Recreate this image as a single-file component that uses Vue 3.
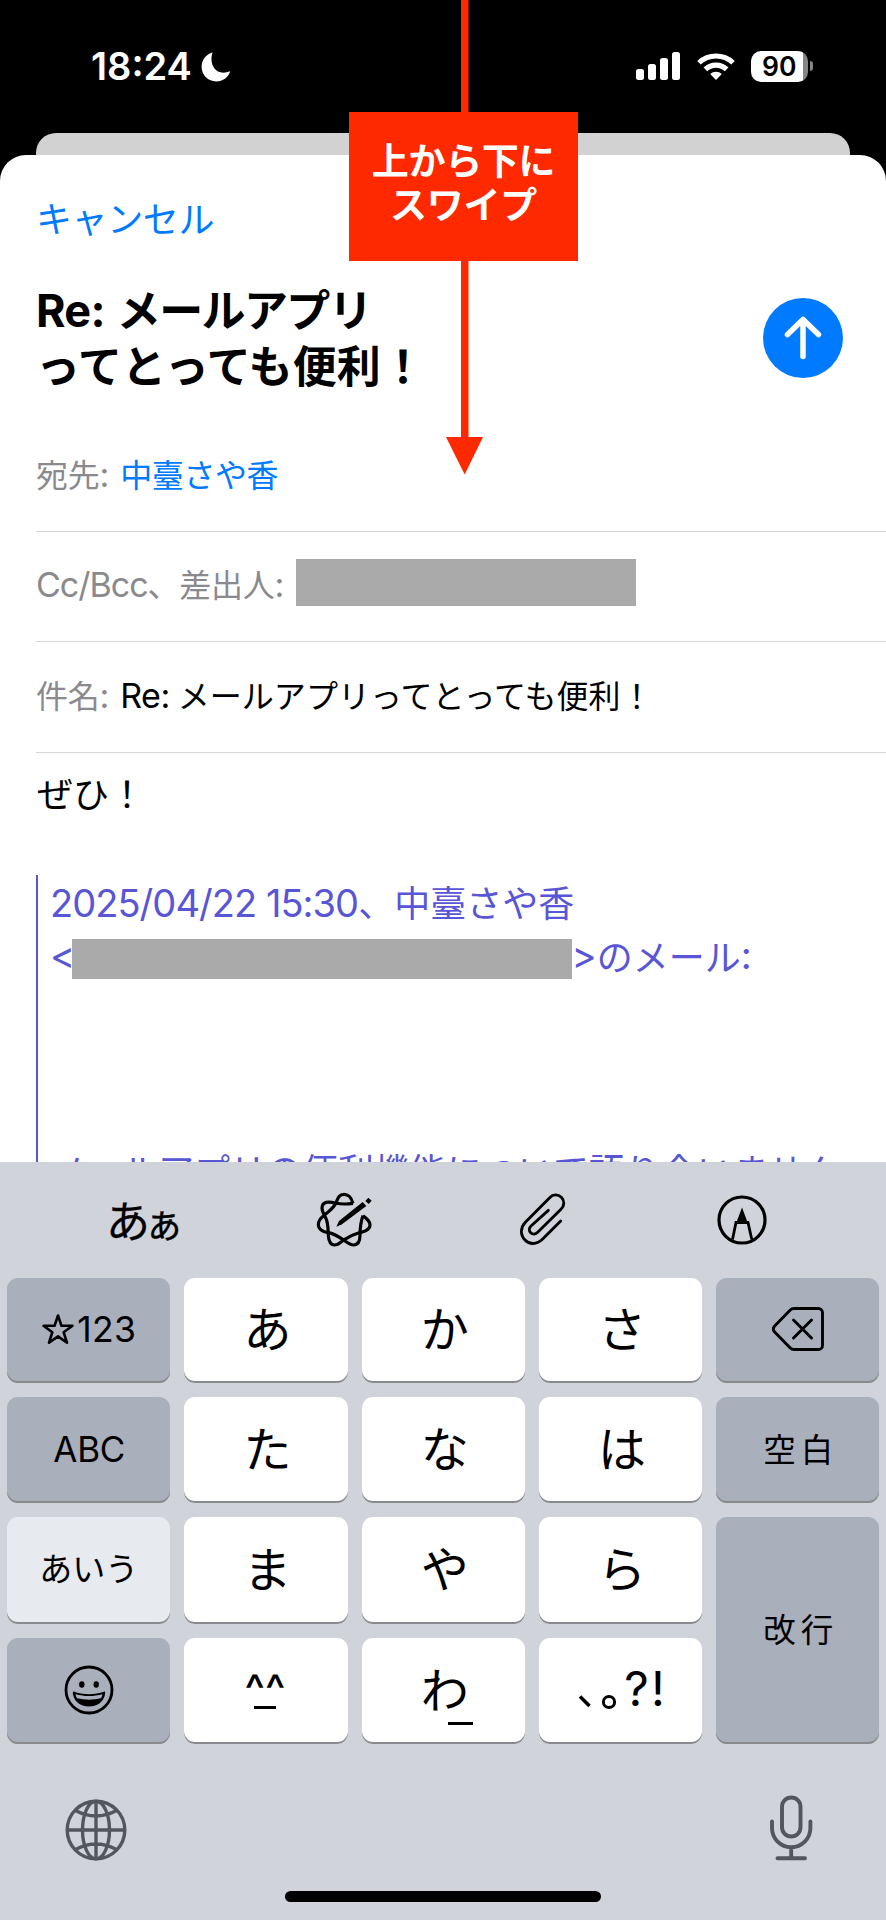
<script setup>
const keys = [
  { id: 'num', type: 'dark', label: '123', star: true, cls: 'latin num' },
  { id: 'a', label: 'あ' },
  { id: 'ka', label: 'か' },
  { id: 'sa', label: 'さ' },
  { id: 'del', type: 'dark', icon: 'delete' },
  { id: 'abc', type: 'dark', label: 'ABC', cls: 'latin abc' },
  { id: 'ta', label: 'た' },
  { id: 'na', label: 'な' },
  { id: 'ha', label: 'は' },
  { id: 'space', type: 'dark', label: '空白', cls: 'word' },
  { id: 'aiu', type: 'light', label: 'あいう', cls: 'aiu' },
  { id: 'ma', label: 'ま' },
  { id: 'ya', label: 'や' },
  { id: 'ra', label: 'ら' },
  { id: 'enter', type: 'dark tall', label: '改行', cls: 'word' },
  { id: 'emoji', type: 'dark', icon: 'emoji' },
  { id: 'face', icon: 'face' },
  { id: 'wa', label: 'わ', under: true },
  { id: 'punct', icon: 'punct' },
]
</script>

<template>
  <div class="phone">
    <header class="status">
      <div class="clock">
        <span class="time">18:24</span>
        <svg class="moon" viewBox="0 0 30 30"><path d="M11.600 .600C8.400 8.800 12.200 20.200 21 20.600c3 .200 5.400-.300 8.200-1.400C27.300 25.400 21.800 29.400 15.400 29.400 7 29.400.600 23 .600 14.800.600 8.200 5 2.300 11.600.600z" fill="#fff" /></svg>
      </div>
      <div class="indicators">
        <div class="bars"><i class="b1" /><i class="b2" /><i class="b3" /><i class="b4" /></div>
        <svg class="wifi" viewBox="0 0 38 28">
          <g fill="#fff">
            <path d="M19 28l-5.800-5.900a8.600 8.600 0 0 1 11.600 0z" />
            <path d="M6.600 15.500a18 18 0 0 1 24.800 0l-3.600 3.700a12.800 12.800 0 0 0-17.600 0z" />
            <path d="M.200 9a27 27 0 0 1 37.600 0l-3.500 3.600a22 22 0 0 0-30.600 0z" />
          </g>
        </svg>
        <div class="battery"><span>90</span></div>
        <div class="nub" />
      </div>
    </header>
    <div class="backcard" />

    <main class="sheet">
      <div class="nav"><a class="cancel">キャンセル</a></div>
      <div class="titlebar">
        <h1><span class="first"><span class="re">Re:</span>メールアプリ</span><br>ってとっても便利！</h1>
        <button class="send">
          <svg viewBox="0 0 80 80"><path d="M40 58.500V22M24.500 36.500L40 21.500l15.500 15" fill="none" stroke="#fff" stroke-width="5.500" stroke-linecap="round" stroke-linejoin="round" /></svg>
        </button>
      </div>
      <section class="row"><span class="lab">宛先<b>:</b></span><span class="to">中臺さや香</span></section>
      <section class="row"><span class="lab"><b class="cc">Cc/Bcc</b>、差出人<b>:</b></span><i class="mask m1" /></section>
      <section class="row"><span class="lab">件名<b>:</b></span><span class="subj"><b>Re:</b>メールアプリってとっても便利！</span></section>
      <div class="body">
        <p class="msg">ぜひ！</p>
        <blockquote>
          <p><b class="date">2025/04/22 15:30</b>、中臺さや香</p>
          <p class="addr"><b class="lt">&lt;</b><i class="mask m2" /><b>&gt;</b>のメール<b>:</b></p>
          <p class="later">メールアプリの便利機能について語り合いません</p>
        </blockquote>
      </div>
    </main>

    <footer class="keyboard">
      <div class="tools">
        <div class="tool"><span class="aa">あ<small>ぁ</small></span></div>
        <div class="tool">
          <svg class="write" viewBox="677 68 168 165">
            <g fill="none" stroke="#000" stroke-width="9.500" stroke-linejoin="round">
              <path d="M788 102C782 82 775 75 761 75C743 75 742 92 734 106C724 122 710 130 699 140C689 148 684 155 684 166C684 182 698 187 714 190C732 193 745 202 760 212C770 219 778 227 790 227C807 227 809 212 809 198C809 180 811 158 818 139" />
              <path d="M788 102C768 105 752 105 735 101C715 96 695 96 695 116C695 128 703 138 708 150C714 166 713 182 714 198C715 214 718 227 733 227C746 227 752 217 762 211C776 202 788 196 802 192C822 187 839 182 839 167C839 155 830 148 818 139" />
            </g>
            <path d="M738 172L746 155L817 98L828 110L755 165z" />
            <path d="M834 85l10 9-9 10-10-9z" />
          </svg>
        </div>
        <div class="tool">
          <svg class="clip" viewBox="56 73 141 158" fill="none" stroke="#000" stroke-width="8.500" stroke-linecap="round" stroke-linejoin="round">
            <path d="M181 157L127 211C109 229 87 228 74 214C59 199 60 177 75 161L148 87C158 76 173 76 183 86C193 96 193 111 182 122L112 191C106 197 97 198 91 192C85 186 86 178 92 172L144 125" />
          </svg>
        </div>
        <div class="tool">
          <svg class="pen" viewBox="0 0 50 50">
            <circle cx="25" cy="25" r="23" fill="none" stroke="#000" stroke-width="3.200" />
            <path d="M25 12.500l6 16h-12z" />
            <path d="M15.500 44.500L19 27.500h12l3.800 17" fill="none" stroke="#000" stroke-width="2.800" />
          </svg>
        </div>
      </div>

      <div class="keys">
        <div v-for="k in keys" :key="k.id" class="key" :class="k.type">
          <svg v-if="k.star" class="star" viewBox="0 0 32 30"><path d="M16 1.500l3.500 10.300h11l-8.800 6.500 3.300 10.400L16 22.400l-9 6.300 3.300-10.400L1.500 11.800h11z" fill="none" stroke="#000" stroke-width="2.600" stroke-linejoin="round" /></svg>
          <span v-if="k.label" :class="k.cls || 'kana'">{{ k.label }}</span>
          <i v-if="k.under" class="under" />
          <svg v-if="k.icon === 'delete'" class="del" viewBox="0 0 52 44" fill="none" stroke="#000" stroke-width="2.900" stroke-linecap="round" stroke-linejoin="round">
            <path d="M22 1.500h24.500a4 4 0 0 1 4 4v33a4 4 0 0 1-4 4H22q-2.200 0-3.700-1.500L2.400 24.700q-2.200-2.700 0-5.400L18.300 3q1.500-1.500 3.700-1.500z" />
            <path d="M21.500 13l18 18M39.500 13l-18 18" />
          </svg>
          <svg v-if="k.icon === 'emoji'" class="emoji" viewBox="0 0 50 50">
            <circle cx="25" cy="25" r="23" fill="none" stroke="#000" stroke-width="2.800" />
            <ellipse cx="17.800" cy="19.500" rx="2.700" ry="3.300" /><ellipse cx="32.200" cy="19.500" rx="2.700" ry="3.300" />
            <path fill-rule="evenodd" d="M9.500 26.500c10 3.600 21 3.600 31 0 1 0 .700 1.500.500 3-1.700 8-8.200 12-16 12s-14.300-4-16-12c-.200-1.500-.500-3 .500-3zM11.500 29.200c.400 1.600.800 2.800 1.500 4 8 1.900 16 1.900 24 0 .700-1.200 1.100-2.400 1.500-4-9 2.400-18 2.400-27 0z" />
          </svg>
          <div v-if="k.icon === 'face'" class="face"><span>^^</span><i /></div>
          <div v-if="k.icon === 'punct'" class="punct"><svg viewBox="0 0 46 18"><path d="M2 3.500l9.500 9.500" stroke="#000" stroke-width="3.600" fill="none" /><circle cx="31" cy="9" r="5.600" stroke="#000" stroke-width="3" fill="none" /></svg><span>?!</span></div>
        </div>
      </div>

      <div class="bottom">
        <svg class="globe" viewBox="0 0 62 62" fill="none" stroke="#53565f" stroke-width="3.400">
          <circle cx="31" cy="31" r="28.800" />
          <ellipse cx="31" cy="31" rx="13.500" ry="28.800" />
          <path d="M31 2v58M2 31h58M10.500 11.500q20.500 11 41 0M10.500 50.500q20.500-11 41 0" />
        </svg>
        <svg class="mic" viewBox="0 0 44 66" fill="none" stroke="#53565f" stroke-width="3.900" stroke-linecap="round">
          <rect x="13" y="2.500" width="18.500" height="39" rx="9.250" />
          <path d="M3 26.500v6.500a19.200 19.200 0 0 0 38.400 0v-6.500M22.200 52.500v10.500M8.500 63.200h27.500" />
        </svg>
      </div>
      <div class="home" />
    </footer>

    <div class="swipe">
      <svg viewBox="0 0 230 475"><path d="M112 0h7.500v437h14.500l-18.300 37.500L97 437h15z" fill="#ff2900" /></svg>
      <div class="callout">上から下に<br>スワイプ</div>
    </div>
  </div>
</template>

<style>
body { margin: 0; }
</style>

<style scoped>
* { box-sizing: border-box; }
.phone {
  position: relative; width: 886px; height: 1920px; overflow: hidden; background: #000;
  font-family: "Noto Sans CJK JP", sans-serif; color: #000;
  display: flex; flex-direction: column;
}
b, .time, .battery, .latin, .re { font-family: Inter, sans-serif; }
b { font-weight: 400; }
p, h1, blockquote { margin: 0; }
svg { display: block; }
.status { height: 133px; flex: none; display: flex; justify-content: space-between; padding: 50px 73px 0 91px; }
.clock { display: flex; height: 33px; align-items: center; }
.time { color: #fff; font-size: 38px; font-weight: 600; line-height: 33px; width: 110px; letter-spacing: 0; }
.moon { width: 30px; height: 30px; }
.indicators { display: flex; height: 32px; align-items: center; }
.bars { display: flex; gap: 4px; align-items: flex-end; height: 28px; width: 44px; margin-right: 17px; }
.bars i { width: 8px; border-radius: 2.500px; background: #fff; }
.b1 { height: 11px; } .b2 { height: 16px; } .b3 { height: 22px; } .b4 { height: 28px; }
.wifi { width: 38px; height: 28px; margin-right: 16px; }
.battery { width: 57px; height: 31px; border-radius: 10px; background: linear-gradient(90deg, #fff 52px, #868686 52px); font-size: 26.500px; font-weight: 600; line-height: 31px; padding-left: 11px; }
.nub { width: 3px; height: 10px; margin-left: 2px; background: #868686; border-radius: 0 4px 4px 0; }
.backcard { flex: none; height: 22px; margin: 0 36px; background: #d2d2d2; border-radius: 20px 20px 0 0; }
.sheet { flex: none; height: 1007px; background: #fff; position: relative; overflow: hidden; border-radius: 26px 26px 0 0; display: flex; flex-direction: column; }
.nav { height: 128px; flex: none; padding: 0 36px 5px; display: flex; align-items: center; }
.cancel { color: #007aff; font-size: 36px; letter-spacing: -.4px; line-height: 50px; }
.titlebar { height: 138px; flex: none; display: flex; justify-content: space-between; align-items: flex-start; padding: 0 43px 0 36px; }
h1 { font-size: 44px; line-height: 55.500px; font-weight: 700; letter-spacing: .1px; margin-top: -2px; }
.first { letter-spacing: -1.600px; }
.re { font-size: 45px; line-height: 1; margin-right: 12px; letter-spacing: -.7px; }
.send { width: 80px; height: 80px; border: 0; padding: 0; border-radius: 50%; background: #007aff; margin-top: 14.500px; }
.row { height: 110.500px; flex: none; margin-left: 36px; padding-bottom: 6px; border-bottom: 1px solid #d5d5d7; display: flex; align-items: center; font-size: 32px; line-height: 44px; letter-spacing: -.3px; white-space: nowrap; }
.row b { font-size: 34px; line-height: 1; }
.lab { color: #8a8a8e; }
.lab b { letter-spacing: 0; }
.lab .cc { letter-spacing: -1px; }
.to { color: #007aff; margin-left: 11px; letter-spacing: -.4px; }
.subj { margin-left: 11px; letter-spacing: .05px; }
.subj b { margin-right: 8px; letter-spacing: -.5px; }
.mask { display: block; background: #aaa; flex: none; }
.m1 { width: 340px; height: 47px; margin-left: 12px; margin-top: -1px; }
.body { font-size: 36px; line-height: 54px; white-space: nowrap; }
.body b { font-size: 38px; line-height: 1; }
.body .date { letter-spacing: -.95px; }
.msg { padding: 12px 0 0 37px; height: 122.500px; }
blockquote { margin-left: 36px; border-left: 2.500px solid #5856d6; padding-left: 12px; height: 300px; color: #5856d6; }
blockquote p { position: relative; top: -1px; }
.addr { display: flex; align-items: center; }
.body .lt { width: 21.500px; letter-spacing: -1px; }
.m2 { position: relative; width: 500px; height: 40px; margin-top: 7px; }
.later { margin-top: 159.500px; }
.keyboard { flex: 1; background: #d0d3da; display: flex; flex-direction: column; align-items: stretch; }
.tools { height: 115.500px; display: flex; padding: 0 45px; align-items: center; }
.tool { flex: 1; display: flex; justify-content: center; align-items: center; }
.aa { font-size: 44px; font-weight: 400; line-height: 50px; white-space: nowrap; -webkit-text-stroke: .3px #000; }
.aa small { font-size: 40px; margin: 0 -1px 0 -6px; }
.write { width: 56px; height: 55px; }
.clip { width: 47px; height: 52.700px; }
.pen { width: 50px; height: 50px; }
.keys { flex: none; display: grid; grid-template-columns: repeat(5, 163.300px); grid-template-rows: 105.500px 105.500px 107px 106px; gap: 14px 14px; padding: 0 7px; }
.key { position: relative; border-radius: 11px; background: #fff; box-shadow: inset 0 -2px 0 #898a8d; display: flex; align-items: center; justify-content: center; padding-bottom: 2px; }
.dark { background: #a9afbb; }
.light { background: #e7eaef; }
.tall { grid-row: 3 / 5; grid-column: 5; }
.kana { font-size: 48px; line-height: 60px; margin: 0 0 6px 3px; }
.latin { font-size: 35.500px; line-height: 44px; }
.num { margin: 2px -1px 0 0; letter-spacing: .3px; }
.abc { font-size: 35px; letter-spacing: -.3px; margin: 1px 0 0 1px; }
.star { width: 32px; height: 30px; margin-right: 3px; }
.word { font-size: 32.500px; letter-spacing: 5px; margin: 0 -6px 3px 0; }
.aiu { font-size: 33px; letter-spacing: 0; margin-bottom: 4px; }
.under { position: absolute; left: 86px; top: 84px; width: 25px; height: 3px; background: #000; }
.del { width: 52px; height: 44px; }
.emoji { width: 50px; height: 50px; }
.face { display: flex; flex-direction: column; align-items: center; font-family: Inter, sans-serif; font-size: 43px; font-weight: 500; line-height: 33px; padding: 2px 2px 0 0; }
.face i { width: 22px; height: 3px; background: #000; }
.punct { display: flex; align-items: flex-end; font-family: Inter, sans-serif; font-size: 48px; font-weight: 400; line-height: 50px; letter-spacing: 2px; margin: 0 0 2px 4px; }
.punct svg { width: 46px; height: 18px; margin-bottom: 3px; }
.bottom { display: flex; justify-content: space-between; padding: 51px 73px 0 65px; height: 147.500px; }
.globe { width: 62px; height: 62px; margin-top: 4px; }
.mic { width: 44px; height: 66px; }
.home { width: 316px; height: 11px; border-radius: 6px; background: #000; margin: 0 auto; }
.swipe { position: absolute; left: 349px; top: 0; width: 230px; height: 475px; }
.callout { position: absolute; left: 0; top: 112px; width: 229px; height: 148.500px; background: #ff2900; color: #fff; font-size: 37px; font-weight: 700; line-height: 44px; letter-spacing: -.3px; text-align: center; padding-top: 25px; }
</style>
